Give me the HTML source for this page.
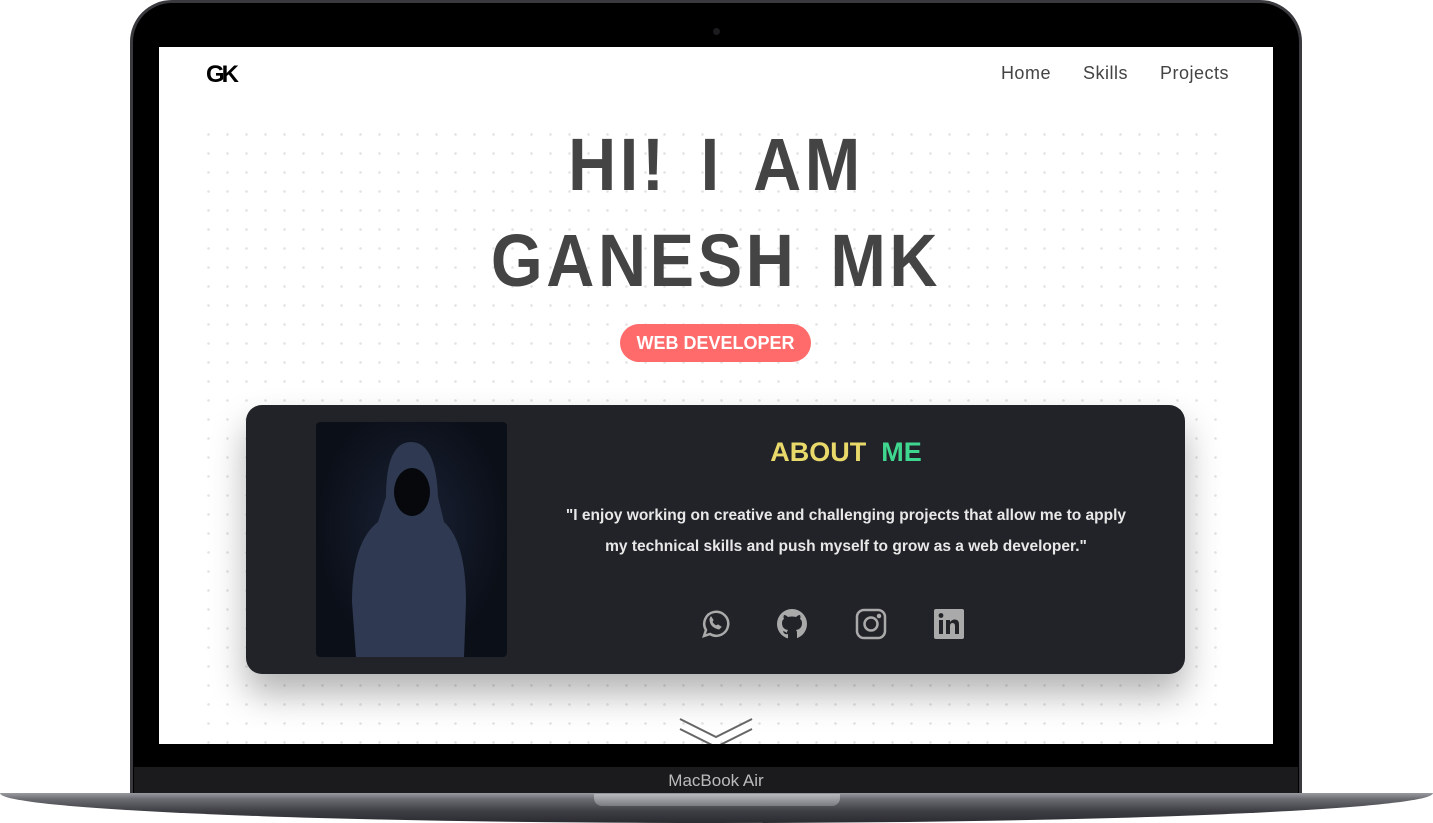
<!DOCTYPE html>
<html><head><style>
*{margin:0;padding:0;box-sizing:border-box}
body{width:1433px;height:823px;background:#fff;position:relative;overflow:hidden;font-family:"Liberation Sans",sans-serif}
.lid{position:absolute;left:130px;top:0;width:1172px;height:800px;background:#000;border-radius:42px 42px 0 0;border:3px solid #3a3a3e;border-bottom:none}
.cam{position:absolute;left:713px;top:28px;width:7px;height:7px;border-radius:50%;background:#1c1c20}
.chin{position:absolute;left:134px;top:767px;width:1164px;height:28px;background:#1b1b1d;color:#bbb;font-size:17px;text-align:center;line-height:28px}
.base{position:absolute;left:0;top:793px;width:1433px;height:30px;background:linear-gradient(#9a9ba0 0,#6b6c72 20%,#3e3f45 60%,#2a2b30);border-radius:0 0 50% 50%/0 0 100% 100%}
.notch{position:absolute;left:594px;top:794px;width:246px;height:12px;background:linear-gradient(#b8b9bd,#7a7b80);border-radius:0 0 8px 8px}
.screen{position:absolute;left:159px;top:47px;width:1114px;height:697px;background:#fff;overflow:hidden}
.dots{position:absolute;left:40px;top:78px;width:1030px;height:620px;background-image:radial-gradient(circle,#e4e4e4 1.2px,transparent 1.5px);background-size:19px 19px}
.logo{position:absolute;left:47px;top:14px;font-weight:bold;font-size:24px;letter-spacing:-3px;color:#000}
.nav{position:absolute;right:44px;top:16px;font-size:18px;color:#444;letter-spacing:.5px}
.nav span{margin-left:32px}
h1{position:absolute;left:0;width:1114px;text-align:center;color:#444;font-size:74px;font-weight:bold;letter-spacing:4px;line-height:96px;top:70px;word-spacing:12px;transform:scaleX(.9)}
.badge{position:absolute;left:461px;top:277px;width:191px;height:38px;border-radius:19px;background:#ff6b6b;color:#fff;font-weight:bold;font-size:18px;text-align:center;line-height:38px}
.card{position:absolute;left:87px;top:358px;width:939px;height:269px;background:#212328;border-radius:16px;box-shadow:0 20px 35px rgba(0,0,0,.3)}
.img{position:absolute;left:70px;top:17px;width:191px;height:235px;border-radius:4px;background:radial-gradient(ellipse at 50% 45%,#1a2235,#0b0f18 70%)}
.ab{position:absolute;left:261px;width:678px;text-align:center;top:32px;font-size:27px;letter-spacing:0;font-weight:bold}
.q{position:absolute;left:305px;width:590px;text-align:center;top:95px;color:#e8e8e8;font-size:16px;line-height:31px;font-weight:bold;transform:scaleX(.97)}
.icons{position:absolute;top:203px;left:452px}
.icons svg{position:absolute;width:32px;height:32px}
.chev{position:absolute;left:519px;top:670px}
</style></head><body>
<div class="lid"></div><div class="cam"></div>
<div class="screen">
<div class="dots"></div>
<div class="logo">GK</div>
<div class="nav"><span>Home</span><span>Skills</span><span>Projects</span></div>
<h1>HI! I AM<br>GANESH MK</h1>
<div class="badge">WEB DEVELOPER</div>
<div class="card">
<div class="img"><svg width="191" height="235" viewBox="0 0 191 235"><path d="M70 75 Q70 20 95 20 Q120 20 122 75 L128 100 Q150 120 150 180 L148 235 L40 235 L36 180 Q36 120 62 100Z" fill="#2f3a52"/><ellipse cx="96" cy="70" rx="18" ry="24" fill="#06080c"/></svg></div>
<div class="ab"><span style="color:#e8d96a">ABOUT</span> &nbsp;<span style="color:#3fd68f">ME</span></div>
<div class="q">"I enjoy working on creative and challenging projects that allow me to apply my technical skills and push myself to grow as a web developer."</div>
<div class="icons">
<svg style="left:0" viewBox="0 0 32 32" fill="none" stroke="#aaa" stroke-width="2.5"><path d="M6 28l2-6a12 12 0 1 1 4 4z"/><path d="M12 11q0 8 9 10l2-2-3-2-2 1q-3-2-4-4l1-2-2-3z" fill="#aaa" stroke-width="1"/></svg>
<svg style="left:78px" viewBox="0 0 32 32"><circle cx="16" cy="16" r="15" fill="#aaa"/><path d="M12 31v-5q-4 1-5-3 3 1 4 2 0-2 1-3-6-1-6-7 0-3 2-4-1-2 0-4 2 0 4 2 4-1 8 0 2-2 4-2 1 2 0 4 2 1 2 4 0 6-6 7 1 1 1 3v6z" fill="#212328"/></svg>
<svg style="left:157px" viewBox="0 0 32 32" fill="none" stroke="#aaa" stroke-width="2.5"><rect x="2" y="2" width="28" height="28" rx="7"/><circle cx="16" cy="16" r="6.5"/><circle cx="24" cy="8" r="1" fill="#aaa"/></svg>
<svg style="left:235px" viewBox="0 0 32 32"><rect x="1" y="1" width="30" height="30" rx="2" fill="#aaa"/><rect x="6" y="12" width="4" height="14" fill="#212328"/><circle cx="8" cy="7.5" r="2.4" fill="#212328"/><path d="M13 12h4v2q2-2.5 5-2.5 4 0 4 5V26h-4v-8q0-3-2.5-3T17 18v8h-4z" fill="#212328"/></svg>
</div>
</div>
<svg class="chev" width="76" height="30" viewBox="0 0 76 30" fill="none" stroke="#666" stroke-width="2"><path d="M2 2l36 18 36-18M2 12l36 18 36-18"/></svg>
</div>
<div class="chin">MacBook Air</div>
<div class="base"></div><div class="notch"></div>
</body></html>
